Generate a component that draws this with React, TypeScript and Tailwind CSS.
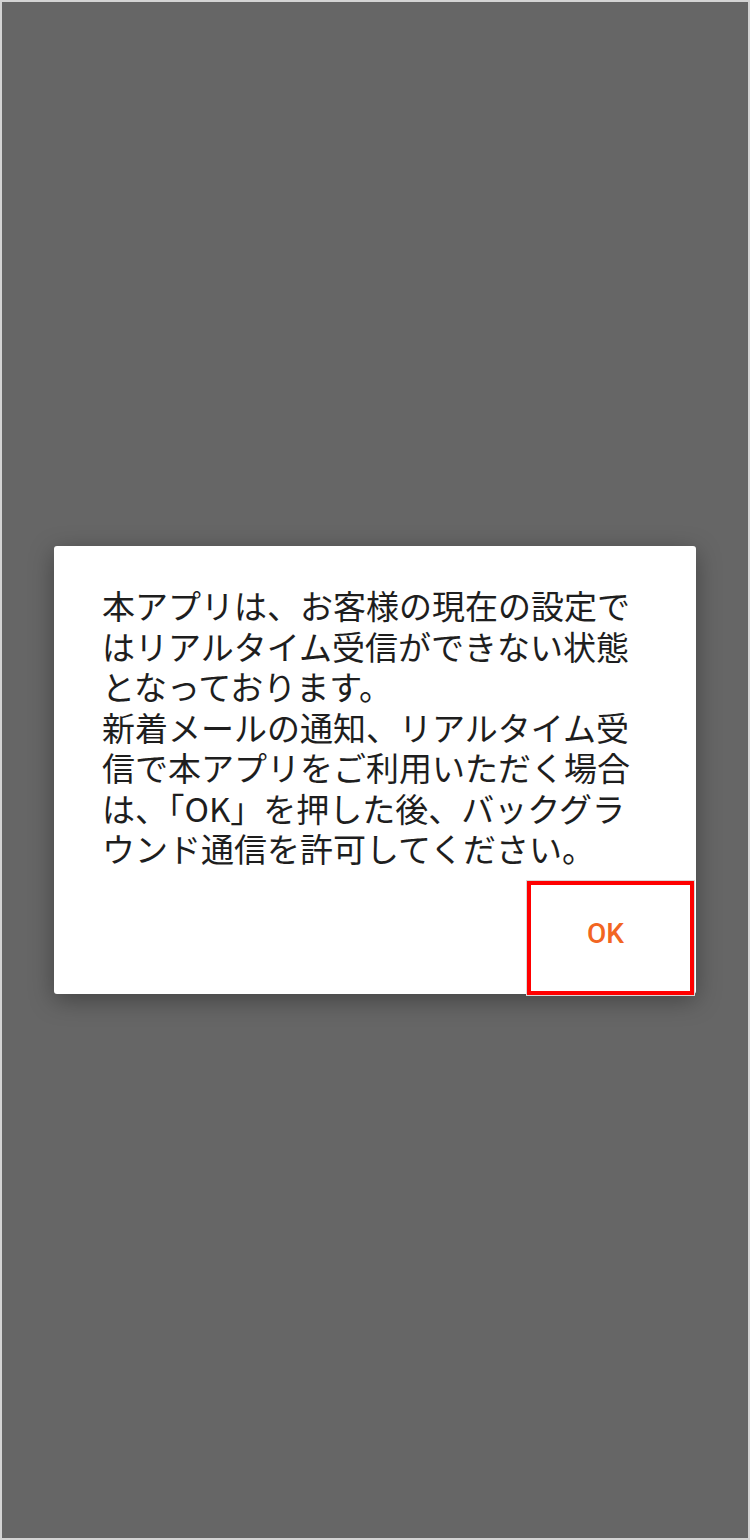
const lines = [
  '本アプリは、お客様の現在の設定で',
  'はリアルタイム受信ができない状態',
  'となっております。',
  '新着メールの通知、リアルタイム受',
  '信で本アプリをご利用いただく場合',
  'は、「OK」を押した後、バックグラ',
  'ウンド通信を許可してください。',
];

export default function App() {
  return (
    <div className="w-[750px] h-[1540px] bg-[#666666] border-2 border-[#d4d4d4] flex items-center">
      {/* dialog */}
      <div className="w-[642px] h-[448px] bg-white rounded-[3px] shadow-[0_6px_24px_rgba(0,0,0,0.35)] flex flex-col ml-[52px]">
        <div
          className="pl-[48px] pt-[39px] text-[33px] leading-[40.5px] text-[#1e1e1e]"
          style={{ fontFamily: '"Noto Sans CJK JP", "Noto Sans", sans-serif' }}
        >
          {lines.map((l, i) => (
            <div key={i} className="whitespace-nowrap">
              {l}
            </div>
          ))}
        </div>
        <div className="flex-1 flex justify-end items-end pr-[2px] pt-[12px]">
          <button
            type="button"
            className="w-[167px] h-[114px] border-[4px] border-[#ff0000] outline outline-1 outline-[#d8d8d8] bg-white text-[#f26522] text-[28px] font-medium flex items-center justify-center pr-[10px] pb-[8px]"
            style={{ fontFamily: 'Roboto, "Noto Sans", sans-serif' }}
          >
            OK
          </button>
        </div>
      </div>
    </div>
  );
}
